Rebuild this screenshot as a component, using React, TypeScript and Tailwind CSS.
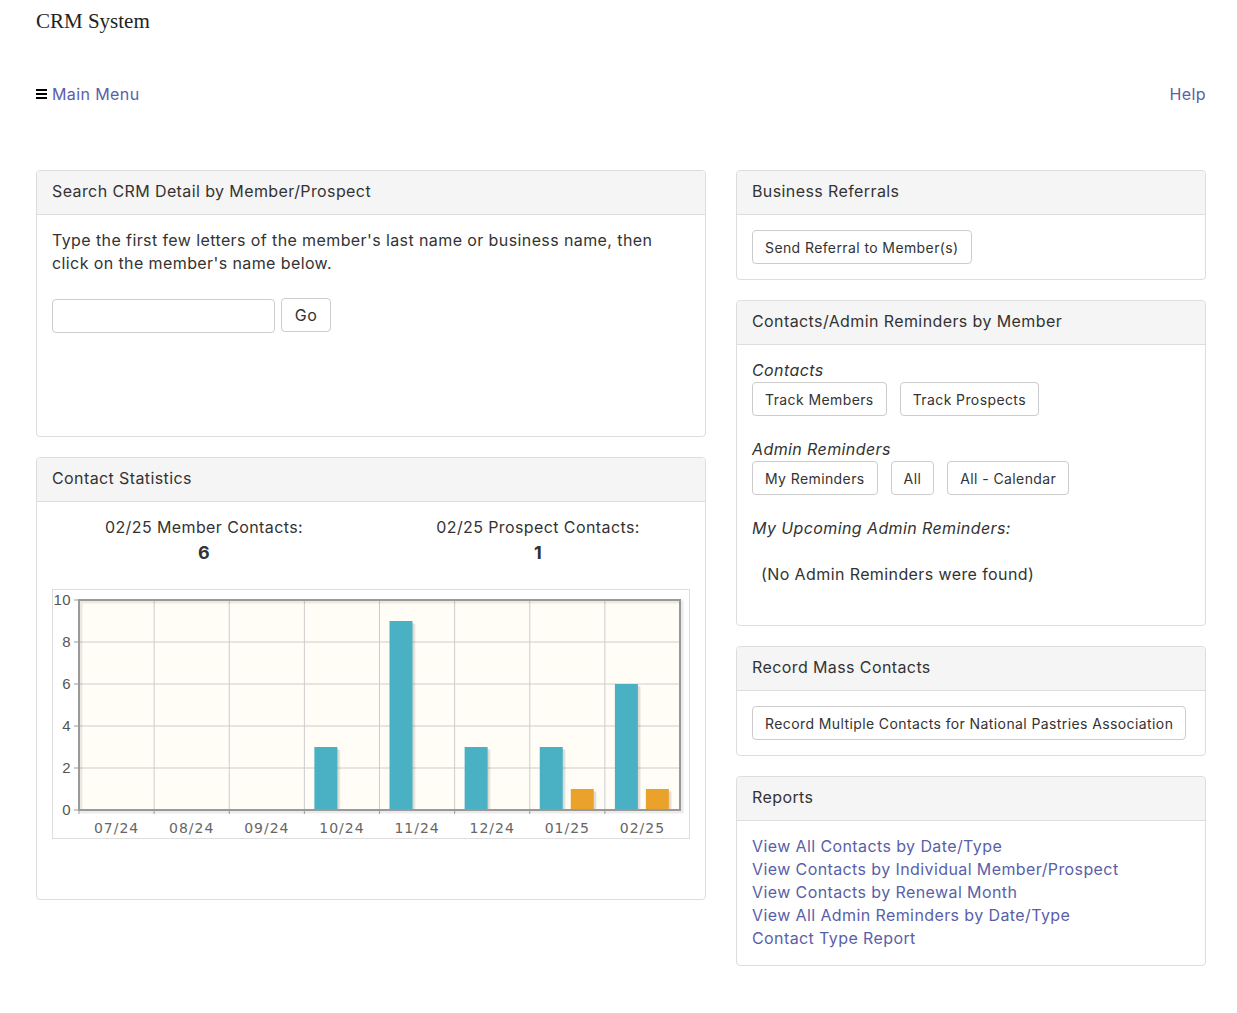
const members = [0, 0, 0, 3, 9, 3, 3, 6];
const prospects = [0, 0, 0, 0, 0, 0, 1, 1];
const months = ['07/24', '08/24', '09/24', '10/24', '11/24', '12/24', '01/25', '02/25'];

const Panel = ({ title, children, className = '' }: { title: string; children: React.ReactNode; className?: string }) => (
  <div className={`border border-[#dddddd] rounded-[4px] bg-white ${className}`}>
    <div className="h-[44px] flex items-center px-[15px] pb-[3px] bg-[#f5f5f5] border-b border-[#dddddd] rounded-t-[4px] text-[16px] text-[#333333]">
      {title}
    </div>
    {children}
  </div>
);

const Btn = ({ children }: { children: React.ReactNode }) => (
  <button className="h-[34px] px-[12px] border border-[#cccccc] rounded-[4px] bg-white text-[14px] text-[#333333]">
    {children}
  </button>
);

const Chart = () => {
  const L = 26;
  const T = 10;
  const W = 601;
  const H = 210;
  const colW = W / 8;
  const y = (v: number) => T + H - (v / 10) * H;
  return (
    <svg width="636" height="248" className="block">
      <rect x={L} y={T} width={W} height={H} fill="#fffdf6" />
      {[2, 4, 6, 8].map((v) => (
        <line key={v} x1={L} x2={L + W} y1={y(v)} y2={y(v)} stroke="#cccccc" strokeWidth="1" />
      ))}
      {[1, 2, 3, 4, 5, 6, 7].map((i) => (
        <line key={i} x1={L + i * colW} x2={L + i * colW} y1={T} y2={T + H} stroke="#cccccc" strokeWidth="1" />
      ))}
      {members.map((v, i) =>
        v > 0 ? (
          <g key={'m' + i}>
            <rect x={L + i * colW + 13} y={y(v) + 3} width="23" height={(v / 10) * H - 3} fill="#000" opacity="0.06" />
            <rect x={L + i * colW + 12} y={y(v) + 2} width="23" height={(v / 10) * H - 2} fill="#000" opacity="0.08" />
            <rect x={L + i * colW + 10} y={y(v)} width="23" height={(v / 10) * H} fill="#4ab0c4" />
          </g>
        ) : null
      )}
      {prospects.map((v, i) =>
        v > 0 ? (
          <g key={'p' + i}>
            <rect x={L + i * colW + 44} y={y(v) + 3} width="23" height={(v / 10) * H - 3} fill="#000" opacity="0.06" />
            <rect x={L + i * colW + 43} y={y(v) + 2} width="23" height={(v / 10) * H - 2} fill="#000" opacity="0.08" />
            <rect x={L + i * colW + 41} y={y(v)} width="23" height={(v / 10) * H} fill="#eaa22a" />
          </g>
        ) : null
      )}
      <rect x={L + 2} y={T + 2} width={W} height={H} fill="none" stroke="#000" strokeOpacity="0.08" strokeWidth="3" />
      <rect x={L} y={T} width={W} height={H} fill="none" stroke="#999999" strokeWidth="2" />
      {[0, 2, 4, 6, 8, 10].map((v) => (
        <g key={'y' + v}>
          <line x1={L - 5} x2={L} y1={y(v)} y2={y(v)} stroke="#999999" strokeWidth="1" />
          <text x={L - 8} y={y(v) + 5} textAnchor="end" fontSize="15" fill="#555555" fontFamily="'Liberation Sans', sans-serif">
            {v}
          </text>
        </g>
      ))}
      {months.map((m, i) => (
        <g key={m}>
          <line x1={L + i * colW} x2={L + i * colW} y1={T + H} y2={T + H + 4} stroke="#999999" strokeWidth="1" />
          <text x={L + i * colW + colW / 2} y={243} textAnchor="middle" fontSize="14" letterSpacing="1" fill="#666666" fontFamily="'DejaVu Sans', sans-serif">
            {m}
          </text>
        </g>
      ))}
    </svg>
  );
};

export default function App() {
  return (
    <div className="w-[1237px] bg-white text-[#333333] font-['Inter',sans-serif] tracking-[0.025em] px-[36px] pb-[20px]">
      <div className="pt-[6px] h-[70px] font-['Liberation_Serif',serif] tracking-normal text-[21px] text-[#222222]">CRM System</div>
      <div className="w-[1170px] flex items-center justify-between h-[48px]">
        <a className="flex items-center gap-[5px] text-[16px] text-[#5a5fa8]" href="#">
          <span className="flex flex-col gap-[2px] w-[11px]">
            <span className="h-[2px] bg-black" />
            <span className="h-[2px] bg-black" />
            <span className="h-[2px] bg-black" />
          </span>
          Main Menu
        </a>
        <a className="text-[16px] text-[#5a5fa8]" href="#">Help</a>
      </div>
      <div className="flex gap-[30px] mt-[52px] items-start">
        <div className="w-[670px] shrink-0 flex flex-col gap-[20px]">
          <Panel title="Search CRM Detail by Member/Prospect" className="h-[267px]">
            <div className="px-[15px] pt-[14px]">
              <p className="text-[16px] leading-[23px] text-[#333333]">
                Type the first few letters of the member's last name or business name, then click on the member's name below.
              </p>
              <div className="flex gap-[6px] mt-[24px]">
                <input className="w-[223px] h-[34px] border border-[#cccccc] rounded-[4px]" />
                <button className="h-[34px] w-[50px] -mt-[1px] border border-[#cccccc] rounded-[4px] text-[16px] text-[#333333]">Go</button>
              </div>
            </div>
          </Panel>
          <Panel title="Contact Statistics" className="h-[443px]">
            <div className="grid grid-cols-2 pt-[13px] text-center">
              <div>
                <div className="text-[16px] leading-[24px]">02/25 Member Contacts:</div>
                <div className="text-[18px] leading-[27px] font-bold">6</div>
              </div>
              <div>
                <div className="text-[16px] leading-[24px]">02/25 Prospect Contacts:</div>
                <div className="text-[18px] leading-[27px] font-bold">1</div>
              </div>
            </div>
            <div className="mx-[15px] mt-[23px] w-[638px] border border-[#dddddd]">
              <Chart />
            </div>
          </Panel>
        </div>
        <div className="w-[470px] shrink-0 flex flex-col gap-[20px]">
          <Panel title="Business Referrals">
            <div className="p-[15px]">
              <Btn>Send Referral to Member(s)</Btn>
            </div>
          </Panel>
          <Panel title="Contacts/Admin Reminders by Member" className="h-[326px]">
            <div className="px-[15px] pt-[13px]">
              <div className="italic text-[16px] leading-[24px]">Contacts</div>
              <div className="flex gap-[13px]">
                <Btn>Track Members</Btn>
                <Btn>Track Prospects</Btn>
              </div>
              <div className="italic text-[16px] leading-[24px] mt-[21px]">Admin Reminders</div>
              <div className="flex gap-[13px]">
                <Btn>My Reminders</Btn>
                <Btn>All</Btn>
                <Btn>All - Calendar</Btn>
              </div>
              <div className="italic text-[16px] leading-[24px] mt-[21px]">My Upcoming Admin Reminders:</div>
              <div className="text-[16px] leading-[24px] mt-[22px] pl-[9px]">(No Admin Reminders were found)</div>
            </div>
          </Panel>
          <Panel title="Record Mass Contacts">
            <div className="p-[15px]">
              <Btn>Record Multiple Contacts for National Pastries Association</Btn>
            </div>
          </Panel>
          <Panel title="Reports">
            <div className="px-[15px] pt-[14px] pb-[15px] flex flex-col text-[16px] leading-[23px] text-[#5a5fa8]">
              <a href="#">View All Contacts by Date/Type</a>
              <a href="#">View Contacts by Individual Member/Prospect</a>
              <a href="#">View Contacts by Renewal Month</a>
              <a href="#">View All Admin Reminders by Date/Type</a>
              <a href="#">Contact Type Report</a>
            </div>
          </Panel>
        </div>
      </div>
    </div>
  );
}
